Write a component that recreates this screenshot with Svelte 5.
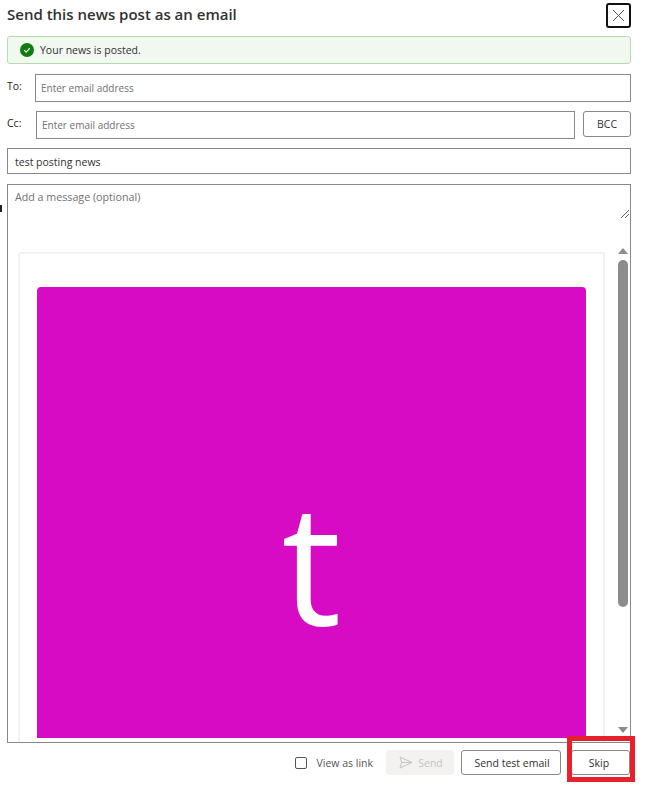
<script>
  let viewAsLink = $state(false);
</script>

<div class="dialog">
  <span class="edge-mark"></span>

  <header class="head">
    <h1>Send this news post as an email</h1>
    <button class="close" aria-label="Close">
      <svg width="13" height="13" viewBox="0 0 13 13"><path d="M1 1l11 11M12 1L1 12" stroke="#555" stroke-width="1" fill="none" /></svg>
    </button>
  </header>

  <div class="alert">
    <svg width="14" height="14" viewBox="0 0 14 14">
      <circle cx="7" cy="7" r="7" fill="#107c10" />
      <path d="M4.2 7.2l2 2 3.6-4" stroke="#fff" stroke-width="1.2" fill="none" />
    </svg>
    <span>Your news is posted.</span>
  </div>

  <div class="row to">
    <span class="label">To:</span>
    <div class="field placeholder">Enter email address</div>
  </div>

  <div class="row cc">
    <span class="label">Cc:</span>
    <div class="field placeholder">Enter email address</div>
    <button class="btn bcc">BCC</button>
  </div>

  <div class="field subject">test posting news</div>

  <div class="body">
    <div class="message">
      <span class="placeholder">Add a message (optional)</span>
      <svg class="grip" width="8" height="8" viewBox="0 0 8 8"><path d="M0 8l8-8M4 8l4-4" stroke="#666" stroke-width="1" /></svg>
    </div>
    <div class="preview">
      <div class="card">
        <div class="cover"><span>t</span></div>
      </div>
      <div class="scrollbar">
        <span class="arrow up"></span>
        <span class="thumb"></span>
        <span class="arrow down"></span>
      </div>
    </div>
  </div>

  <footer class="foot">
    <label class="check">
      <input type="checkbox" bind:checked={viewAsLink} />
      <span>View as link</span>
    </label>
    <button class="btn send" disabled>
      <svg width="14" height="13" viewBox="0 0 14 13"><path d="M1 1l12 5.5L1 12l1.6-5.5zM2.6 6.5H13" stroke="#c4c4c4" stroke-width="1" fill="none" /></svg>
      Send
    </button>
    <button class="btn test">Send test email</button>
    <button class="btn skip">Skip</button>
    <span class="highlight"></span>
  </footer>
</div>

<style>
  :global(body) {
    background: #fff;
  }

  .dialog {
    position: relative;
    width: 646px;
    height: 785px;
    box-sizing: border-box;
    padding: 3px 15px 0 7px;
    font-family: "Open Sans", "Noto Sans", sans-serif;
    font-size: 10.5px;
    color: #323130;
    overflow: hidden;
  }

  .edge-mark {
    position: absolute;
    left: 0;
    top: 205px;
    width: 2px;
    height: 7px;
    background: #222;
  }

  .head {
    display: flex;
    justify-content: space-between;
    align-items: center;
    height: 25px;
  }

  h1 {
    margin: 0;
    font-size: 15px;
    font-weight: 600;
    position: relative;
    top: -2px;
  }

  .close {
    width: 25px;
    height: 25px;
    padding: 0;
    display: flex;
    align-items: center;
    justify-content: center;
    background: #fff;
    border: 2px solid #111;
    border-radius: 3px;
  }

  .alert {
    display: flex;
    align-items: center;
    gap: 6px;
    height: 28px;
    box-sizing: border-box;
    margin-top: 8px;
    padding-left: 12px;
    background: #f1f8f0;
    border: 1px solid #b5dcb0;
    border-radius: 3px;
    color: #323130;
  }

  .row {
    display: flex;
    align-items: flex-start;
  }

  .row.to {
    margin-top: 10px;
  }

  .row.cc {
    margin-top: 9px;
  }

  .label {
    font-weight: 500;
    color: #222;
    padding-top: 5px;
    width: 28px;
    flex: none;
  }

  .cc .label {
    width: 29px;
  }

  .field {
    flex: 1;
    box-sizing: border-box;
    height: 28px;
    display: flex;
    align-items: center;
    padding-left: 5px;
    border: 1px solid #8a8886;
  }

  .placeholder {
    color: #707070;
  }

  .row .placeholder {
    font-size: 10px;
  }

  .subject {
    flex: none;
    height: 26px;
    margin-top: 9px;
    padding: 1px 0 0 7px;
  }

  .body {
    display: flex;
    flex-direction: column;
    height: 559px;
    box-sizing: border-box;
    margin-top: 10px;
    border: 1px solid #8a8886;
    overflow: hidden;
  }

  .message {
    position: relative;
    height: 67px;
    flex: none;
    box-sizing: border-box;
    padding: 5px 7px;
    font-size: 10.7px;
  }

  .grip {
    position: absolute;
    right: 1px;
    top: 25px;
  }

  .preview {
    display: flex;
    flex: 1;
    min-height: 0;
    padding-left: 10px;
  }

  .card {
    width: 587px;
    flex: none;
    box-sizing: border-box;
    height: 600px;
    padding: 33px 17px 0;
    background: #fff;
    border: 2px solid #f2f2f2;
    border-radius: 3px;
  }

  .cover {
    display: flex;
    justify-content: center;
    height: 451px;
    padding-top: 187px;
    box-sizing: border-box;
    background: #d60bc3;
    border-radius: 4px 4px 0 0;
    color: #fff;
    font-size: 168px;
    line-height: 172px;
    font-weight: 530;
    font-family: "Open Sans", sans-serif;
  }

  .scrollbar {
    position: relative;
    width: 10px;
    margin-left: 13px;
  }

  .thumb {
    position: absolute;
    top: 8px;
    left: 0;
    width: 10px;
    height: 347px;
    border-radius: 5px;
    background: #8c8c8c;
  }

  .arrow {
    position: absolute;
    left: 0;
    width: 0;
    height: 0;
    border-left: 5px solid transparent;
    border-right: 5px solid transparent;
  }

  .arrow.up {
    top: -4px;
    border-bottom: 6px solid #8c8c8c;
  }

  .arrow.down {
    bottom: 9px;
    border-top: 6px solid #8c8c8c;
  }

  .foot {
    position: relative;
    display: flex;
    align-items: center;
    justify-content: flex-end;
    height: 25px;
    margin-top: 7px;
  }

  .check {
    display: flex;
    align-items: center;
    gap: 10px;
    margin-right: 13px;
    color: #555;
  }

  .check input {
    width: 12px;
    height: 12px;
    margin: 0;
    appearance: none;
    background: #fff;
    border: 1px solid #555;
    border-radius: 2px;
  }

  .btn {
    box-sizing: border-box;
    height: 25px;
    padding: 0;
    font: inherit;
    color: #323130;
    background: #fff;
    border: 1px solid #8a8886;
    border-radius: 3px;
  }

  .bcc {
    width: 48px;
    height: 26px;
    margin-left: 8px;
  }

  .send {
    width: 68px;
    display: flex;
    align-items: center;
    justify-content: center;
    gap: 5px;
    background: #f3f2f1;
    border-color: #f3f2f1;
    color: #c4c4c4;
    padding-left: 2px;
  }

  .test {
    width: 100px;
    margin-left: 7px;
    padding-left: 2px;
  }

  .skip {
    width: 59px;
    margin-left: 10px;
    margin-right: 1px;
    padding: 1px 3px 0 0;
  }

  .highlight {
    position: absolute;
    right: -4px;
    top: -14px;
    width: 68px;
    height: 46px;
    box-sizing: border-box;
    border: 5px solid #e8202a;
  }
</style>
